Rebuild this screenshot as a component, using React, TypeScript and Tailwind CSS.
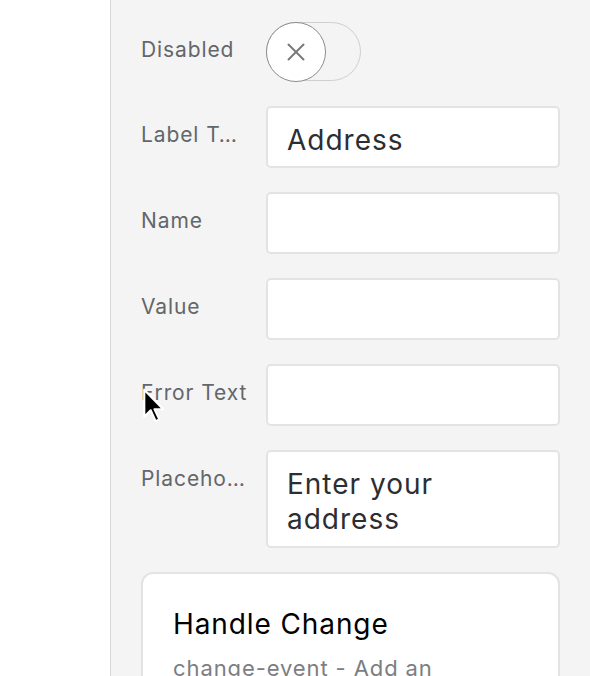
import { X } from "lucide-react"

const fields = [
    { label: "Label T…", value: "Address" },
    { label: "Name", value: "" },
    { label: "Value", value: "" },
    { label: "Error Text", value: "" },
]

function Row({ label, children }: { label: string; children: React.ReactNode }) {
    return (
        <div className="flex items-start gap-[14px]">
            <div className="w-[110px] shrink-0 pt-[16px] text-[21px] leading-[26px] tracking-[0.9px] text-[#63666b] whitespace-nowrap overflow-hidden">
                {label}
            </div>
            {children}
        </div>
    )
}

export default function App() {
    return (
        <div className="relative flex h-[676px] w-[590px] overflow-hidden bg-white font-['Inter',sans-serif]">
            <div className="w-[111px] shrink-0 border-r border-[#d6d6d6]" />
            <div className="flex-1 bg-[#f4f4f4] pl-[30px] pr-[30px] pt-[22px]">
                <div className="flex flex-col gap-[24px]">
                    <div className="mb-[1px] flex items-center gap-[15px]">
                        <div className="-mt-[4px] w-[110px] shrink-0 text-[21px] tracking-[0.9px] text-[#63666b]">Disabled</div>
                        <div className="relative h-[59px] w-[95px] rounded-full border-[1.5px] border-[#cfcfcf] bg-[#f4f4f4]">
                            <div className="absolute -left-[1.5px] -top-[1.5px] flex h-[60px] w-[60px] items-center justify-center rounded-full border-[1.5px] border-[#8c8c8c] bg-white">
                                <X size={30} strokeWidth={1.6} className="text-[#7a7a7a]" />
                            </div>
                        </div>
                    </div>
                    {fields.map((f) => (
                        <div key={f.label} className="flex items-start gap-[15px]">
                            <div className="w-[110px] shrink-0 pt-[16px] text-[21px] leading-[26px] tracking-[0.9px] text-[#63666b] whitespace-nowrap overflow-hidden">
                                {f.label}
                            </div>
                            <div className="flex h-[62px] flex-1 items-center rounded-[5px] border-2 border-[#e3e3e5] bg-white px-[19px] pt-[5px] text-[28px] tracking-[1px] text-[#2b2e33]">
                                {f.value}
                            </div>
                        </div>
                    ))}
                    <div className="flex items-start gap-[15px]">
                        <div className="w-[110px] shrink-0 pt-[16px] text-[21px] leading-[26px] tracking-[0.9px] text-[#63666b] whitespace-nowrap overflow-hidden">
                            Placeho…
                        </div>
                        <div className="h-[98px] flex-1 rounded-[5px] border-2 border-[#e3e3e5] bg-white px-[19px] pt-[15px] text-[28px] leading-[35px] tracking-[1px] text-[#2b2e33]">
                            Enter your address
                        </div>
                    </div>
                </div>
                <div className="mt-[24px] rounded-[12px] border-2 border-[#e3e3e5] bg-white px-[30px] pt-[32px] pb-6">
                    <div className="text-[28px] leading-[36px] tracking-[0.9px] text-black">Handle Change</div>
                    <div className="mt-[12px] text-[22px] leading-[28px] tracking-[0.9px] text-[#7b7e83]">change-event - Add an</div>
                </div>
            </div>
            <svg className="absolute left-[141px] top-[386px]" width="26" height="40" viewBox="0 0 24 36">
                <path d="M3 3 L3 28 L9 22 L13.5 32 L17 30.5 L12.5 21 L20.5 21 Z" fill="#000" stroke="#fff" strokeWidth="2" strokeLinejoin="round" />
            </svg>
        </div>
    )
}
